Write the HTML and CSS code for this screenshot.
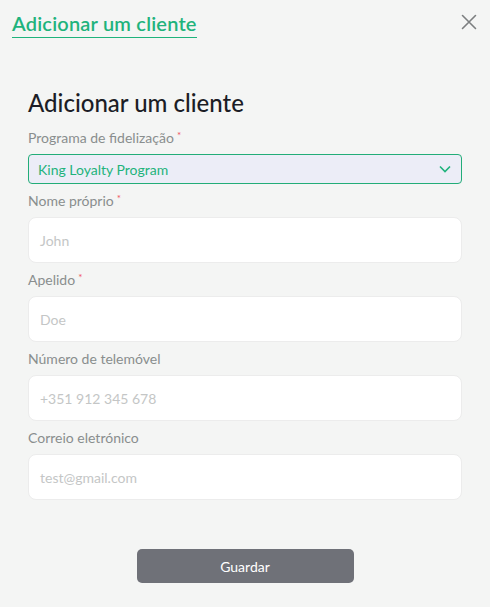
FILE: index.html
```html
<!DOCTYPE html>
<html lang="pt">
<head>
<meta charset="utf-8">
<link rel="stylesheet" href="styles.css">
</head>
<body>
<div class="page">
  <header class="topbar">
    <div class="tab">Adicionar um cliente</div>
    <button class="close" aria-label="Fechar">
      <svg width="16" height="16" viewBox="0 0 16 16"><path d="M1.5 1.5L14.5 14.5M14.5 1.5L1.5 14.5" stroke="#7c7f80" stroke-width="1.6" fill="none" stroke-linecap="round"/></svg>
    </button>
  </header>
  <main class="form">
    <h1 class="title">Adicionar um cliente</h1>
    <div class="field">
      <label class="label">Programa de fidelização<span class="req">*</span></label>
      <div class="select">
        <span>King Loyalty Program</span>
        <svg width="12" height="8" viewBox="0 0 12 8"><path d="M1 1.5L6 6.5L11 1.5" stroke="#1fb37c" stroke-width="1.6" fill="none"/></svg>
      </div>
    </div>
    <div class="field">
      <label class="label">Nome próprio<span class="req">*</span></label>
      <div class="input">John</div>
    </div>
    <div class="field">
      <label class="label">Apelido<span class="req">*</span></label>
      <div class="input">Doe</div>
    </div>
    <div class="field">
      <label class="label">Número de telemóvel</label>
      <div class="input">+351 912 345 678</div>
    </div>
    <div class="field">
      <label class="label">Correio eletrónico</label>
      <div class="input">test@gmail.com</div>
    </div>
    <div class="actions">
      <button class="save">Guardar</button>
    </div>
  </main>
</div>
</body>
</html>
```
FILE: styles.css
```css
* { box-sizing: border-box; }
html, body { margin: 0; padding: 0; }
body {
  background: #f4f5f4;
  font-family: Lato, "Noto Sans", sans-serif;
  width: 490px;
  height: 607px;
  overflow: hidden;
}
.page { padding: 0; }
.topbar {
  display: flex;
  justify-content: space-between;
  align-items: flex-start;
  padding: 11px 12px 0 12px;
  height: 60px;
}
.tab {
  color: #1fb37c;
  font-size: 20px;
  font-weight: 600;
  line-height: 24px;
  padding-bottom: 2px;
  border-bottom: 1px solid #1fb37c;
  letter-spacing: 0.2px;
}
.close {
  background: none;
  border: 0;
  padding: 0;
  margin: 3px 1px 0 0;
  width: 16px;
  height: 16px;
  display: flex;
}
.form {
  padding: 28px 28px 0 28px;
  display: flex;
  flex-direction: column;
}
.title {
  margin: 0 0 11px 0;
  font-size: 24px;
  font-weight: 500;
  color: #1c1d26;
  line-height: 30px;
}
.field { display: flex; flex-direction: column; margin-bottom: 8px; }
.label {
  color: #898e8e;
  font-size: 14px;
  line-height: 18px;
  margin-bottom: 7px;
}
.req {
  color: #f0545e;
  font-size: 10px;
  vertical-align: top;
  margin-left: 3px;
  position: relative;
  top: -3px;
}
.select {
  height: 30px;
  border: 1px solid #22ad78;
  border-radius: 4px;
  background: #ecedf7;
  display: flex;
  align-items: center;
  justify-content: space-between;
  padding: 0 10px 0 9px;
  color: #1fb37c;
  font-size: 14px;
}
.input {
  height: 46px;
  background: #fff;
  border: 1px solid #ececec;
  border-radius: 8px;
  display: flex;
  align-items: center;
  padding: 0 11px;
  color: #c4c6c6;
  font-size: 14px;
}
.actions {
  display: flex;
  justify-content: center;
  margin-top: 41px;
}
.save {
  width: 217px;
  height: 34px;
  background: #6f7178;
  border: 0;
  border-radius: 5px;
  color: #fff;
  font-family: Lato, "Noto Sans", sans-serif;
  font-size: 14px;
  font-weight: 400;
}
```
